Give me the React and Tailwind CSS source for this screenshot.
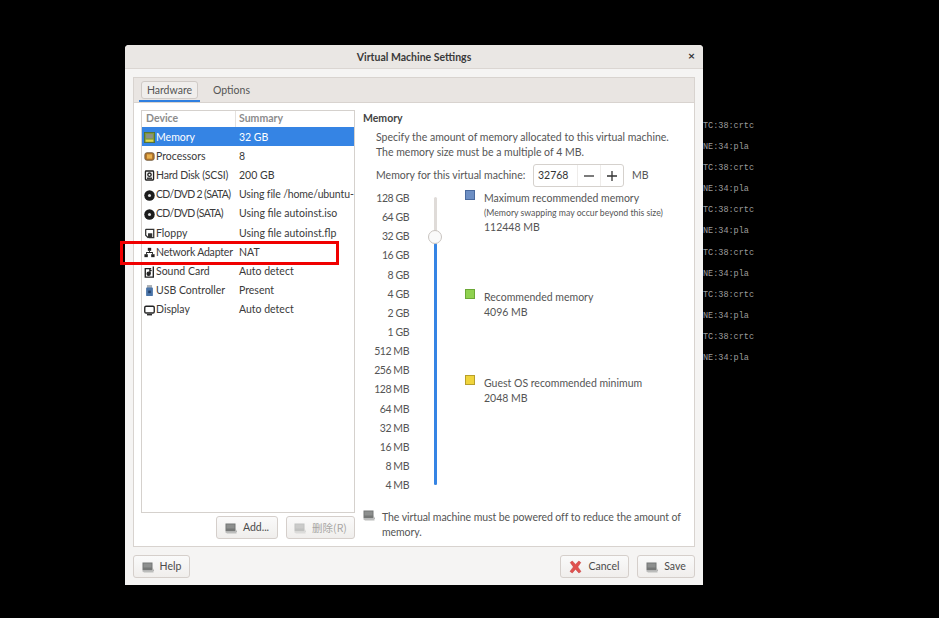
const devices = [
  { name: "Memory", summary: "32 GB", icon: "memory" },
  { name: "Processors", summary: "8", icon: "cpu" },
  { name: "Hard Disk (SCSI)", summary: "200 GB", icon: "disk", nameCls: "tracking-[-0.2px]" },
  { name: "CD/DVD 2 (SATA)", summary: "Using file /home/ubuntu-", icon: "cd", nameCls: "tracking-[-0.65px]", sumCls: "tracking-[-0.12px]" },
  { name: "CD/DVD (SATA)", summary: "Using file autoinst.iso", icon: "cd", nameCls: "tracking-[-0.65px]" },
  { name: "Floppy", summary: "Using file autoinst.flp", icon: "floppy" },
  { name: "Network Adapter", summary: "NAT", icon: "network", nameCls: "tracking-[-0.2px]" },
  { name: "Sound Card", summary: "Auto detect", icon: "sound" },
  { name: "USB Controller", summary: "Present", icon: "usb" },
  { name: "Display", summary: "Auto detect", icon: "display" },
];

const scale = ["128 GB", "64 GB", "32 GB", "16 GB", "8 GB", "4 GB", "2 GB", "1 GB", "512 MB", "256 MB", "128 MB", "64 MB", "32 MB", "16 MB", "8 MB", "4 MB"];

const termLines = ["TC:38:crtc", "NE:34:pla", "TC:38:crtc", "NE:34:pla", "TC:38:crtc", "NE:34:pla", "TC:38:crtc", "NE:34:pla", "TC:38:crtc", "NE:34:pla", "TC:38:crtc", "NE:34:pla"];

function DeviceIcon({ type }) {
  if (type === "memory")
    return (
      <svg width="11" height="11" viewBox="0 0 13 13">
        <rect x="0.5" y="0.5" width="12" height="12" fill="#7f9a3c" stroke="#55702a" />
        <rect x="2.5" y="2.5" width="8" height="5" fill="#8a8f88" />
        <rect x="2" y="9" width="9" height="2.5" fill="#e3d84d" />
      </svg>
    );
  if (type === "cpu")
    return (
      <svg width="11" height="11" viewBox="0 0 13 13">
        <rect x="1" y="2" width="11" height="9" rx="2.5" fill="#b5762a" stroke="#6f5a3e" />
        <rect x="3.5" y="4" width="6" height="5" fill="#e8b04e" />
      </svg>
    );
  if (type === "disk")
    return (
      <svg width="11" height="11" viewBox="0 0 13 13" fill="none" stroke="#222" strokeWidth="1.6">
        <rect x="1.7" y="1.2" width="9.6" height="10.6" rx="0.8" />
        <circle cx="6.5" cy="5.5" r="2" />
        <path d="M3.5 9.7h6" />
      </svg>
    );
  if (type === "cd")
    return (
      <svg width="11" height="11" viewBox="0 0 13 13">
        <circle cx="6.5" cy="6.5" r="6.2" fill="#1c1c1c" />
        <circle cx="6.5" cy="6.5" r="1.8" fill="#ddd" />
      </svg>
    );
  if (type === "floppy")
    return (
      <svg width="11" height="11" viewBox="0 0 13 13" fill="none" stroke="#333" strokeWidth="1.5">
        <path d="M2 1.5h9.5v10H5.5" />
        <path d="M2 1.5v7l3 3" />
        <rect x="5.5" y="7" width="3.5" height="4" fill="#333" />
      </svg>
    );
  if (type === "network")
    return (
      <svg width="11" height="11" viewBox="0 0 13 13" fill="#222">
        <rect x="4.5" y="1" width="4" height="3.5" />
        <rect x="0.5" y="8.5" width="4" height="3.5" />
        <rect x="8.5" y="8.5" width="4" height="3.5" />
        <path d="M6 4.5h1V6h3.5v2.5h-1V7h-6v1.5h-1V6H6z" />
      </svg>
    );
  if (type === "sound")
    return (
      <svg width="11" height="12" viewBox="0 0 13 14" fill="none" stroke="#222" strokeWidth="1.6">
        <path d="M8.5 3H1.5v10H11V0.5" />
        <circle cx="5.5" cy="9" r="1.8" fill="#222" />
        <path d="M7 9V4.5l2 1" />
      </svg>
    );
  if (type === "usb")
    return (
      <svg width="11" height="12" viewBox="0 0 13 14">
        <rect x="3.5" y="0" width="6" height="4" fill="#aab0b6" />
        <rect x="2.5" y="3" width="8" height="10" rx="1" fill="#4a74a8" />
        <rect x="5" y="6.5" width="3" height="3" fill="#23406a" />
      </svg>
    );
  return (
    <svg width="11" height="11" viewBox="0 0 13 13" fill="none" stroke="#222" strokeWidth="1.6">
      <rect x="0.9" y="1.5" width="11.2" height="8" rx="1.5" />
      <path d="M3.5 11.5h6" />
    </svg>
  );
}

// placeholder glyph the app shows for a missing button image
function MissingIcon({ faded }) {
  return (
    <svg width="12" height="11" viewBox="0 0 12 11" className={faded ? "opacity-40" : ""}>
      <rect x="0.5" y="0.5" width="10" height="8" fill="#757776" />
      <rect x="1.5" y="1.5" width="8" height="4" fill="#8d8f8e" />
      <path d="M0 9h11.5v1.5H2z" fill="#bcbdbc" />
      <path d="M10.5 5v4h1.5z" fill="#a3a4a3" />
    </svg>
  );
}

function CancelIcon() {
  return (
    <svg width="13" height="14" viewBox="0 0 13 14">
      <path d="M1.2 2.5L3.3 1l3.2 3.4L9.8 1l2 1.6-3 4.3 3.2 4.6-2.1 1.5-3.4-3.8-3.2 3.8L1 11.4l3.4-4.5z" fill="#e0524f" stroke="#c23b3b" strokeWidth="0.5" />
    </svg>
  );
}

function Button({ icon, children, className = "", faded }) {
  return (
    <div
      className={`flex h-[23px] items-center justify-center gap-[6px] rounded-[3px] border border-[#d5cfcb] bg-gradient-to-b from-[#fafafa] to-[#f0eeec] pt-[1px] ${faded ? "text-[#a8a6a4]" : "text-[#4b4b4b]"} ${className}`}
    >
      {icon}
      <span>{children}</span>
    </div>
  );
}

function Legend({ color, border, title, note, value, className = "" }) {
  return (
    <div className={`flex gap-[9px] ${className}`}>
      <div className={`mt-[-1px] h-[10px] w-[10px] shrink-0 border ${color} ${border}`} />
      <div className="text-[#555]">
        <div className="h-[15px] leading-[15px]">{title}</div>
        {note && <div className="h-[14px] text-[8.7px] leading-[14px]">{note}</div>}
        <div className="h-[14px] leading-[14px]">{value}</div>
      </div>
    </div>
  );
}

export default function App() {
  return (
    <div className="relative h-[618px] w-[939px] overflow-hidden bg-black font-['Lato',sans-serif] text-[10.5px]">
      {/* terminal behind the dialog */}
      <div className="absolute left-[703px] top-[116px] font-['Liberation_Mono',monospace] text-[8.5px] text-[#9c9c9c]">
        {termLines.map((line, i) => (
          <div key={i} className="h-[21.1px] leading-[21px]">{line}</div>
        ))}
      </div>

      {/* dialog window */}
      <div className="absolute left-[125px] top-[45px] flex h-[540px] w-[578px] flex-col rounded-t-[4px] bg-[#f5f4f3]">
        <div className="relative flex h-[24px] shrink-0 items-center justify-center rounded-t-[4px] border-b border-[#dbd6d2] bg-[#eae7e4] pt-[2px] font-bold text-[#3a3a3a]">
          Virtual Machine Settings
          <span className="absolute right-[8px] top-[3px] text-[12px] font-bold leading-[16px] text-[#333]">×</span>
        </div>

        <div className="mx-[8px] mt-[8px] flex h-[470px] flex-col border border-[#d8d3cf] bg-white">
          {/* tabs */}
          <div className="flex h-[25px] shrink-0 border-b border-[#d8d3cf] bg-[#e9e5e2] pl-[5px] text-[#555]">
            <div className="relative flex w-[61px] justify-center pt-[3px]">
              <div className="flex h-[18px] w-[57px] items-center justify-center rounded-[3px] border border-[#cfcac6] bg-[#f0eeec] pt-[1px]">Hardware</div>
              <div className="absolute inset-x-0 bottom-0 h-[2px] bg-[#2f7fe0]" />
            </div>
            <div className="ml-[13px] pt-[3px] leading-[19px]">Options</div>
          </div>

          <div className="flex min-h-0 flex-1">
            {/* left column: device list */}
            <div className="ml-[7px] flex w-[214px] shrink-0 flex-col pt-[7px]">
              <div className="flex h-[403px] flex-col border border-[#d5d1cd]">
                <div className="flex h-[16px] shrink-0 font-bold leading-[15px] text-[#8c8c8c]">
                  <div className="w-[94px] border-r border-[#e4e1de] pl-[4px]">Device</div>
                  <div className="pl-[3px]">Summary</div>
                </div>
                {devices.map((d) => (
                  <div
                    key={d.name}
                    className={`flex h-[19.2px] shrink-0 items-center pt-[2px] ${d.name === "Memory" ? "bg-[#3584e4] text-white" : "text-[#3a3a3a]"}`}
                  >
                    <span className="flex w-[14px] shrink-0 pl-[2px]"><DeviceIcon type={d.icon} /></span>
                    <span className={`w-[83px] shrink-0 whitespace-nowrap ${d.nameCls || ""}`}>{d.name}</span>
                    <span className={`whitespace-nowrap ${d.sumCls || ""}`}>{d.summary}</span>
                  </div>
                ))}
              </div>
              <div className="mt-[3px] flex justify-end gap-[8px]">
                <Button className="w-[62px]" icon={<MissingIcon />}>Add...</Button>
                <Button className="w-[69px]" faded icon={<MissingIcon faded />}>
                  <span className="font-['Noto_Sans_CJK_SC','Lato',sans-serif]">删除(R)</span>
                </Button>
              </div>
            </div>

            {/* right column: memory settings */}
            <div className="ml-[8px] flex min-w-0 flex-1 flex-col pt-[7px] text-[#555]">
              <div className="h-[16px] font-bold leading-[16px] text-[#444]">Memory</div>
              <div className="ml-[13px] mt-[4px] leading-[15px]">
                <div>Specify the amount of memory allocated to this virtual machine.</div>
                <div>The memory size must be a multiple of 4 MB.</div>
              </div>
              <div className="ml-[13px] mt-[4px] flex h-[23px] items-center">
                <span className="w-[157px] whitespace-nowrap">Memory for this virtual machine:</span>
                <div className="flex h-[23px] w-[91px] items-center rounded-[3px] border border-[#d5d1cd] text-[#333]">
                  <span className="w-[43px] pl-[4px]">32768</span>
                  <span className="flex h-full w-[23px] items-center justify-center border-l border-[#eeecea]">
                    <svg width="10" height="10" viewBox="0 0 10 10" stroke="#333" strokeWidth="1.3"><path d="M0 5h10" /></svg>
                  </span>
                  <span className="flex h-full w-[23px] items-center justify-center border-l border-[#eeecea]">
                    <svg width="10" height="10" viewBox="0 0 10 10" stroke="#333" strokeWidth="1.3"><path d="M0 5h10M5 0v10" /></svg>
                  </span>
                </div>
                <span className="ml-[8px]">MB</span>
              </div>

              <div className="mt-[2px] flex h-[308px]">
                <div className="ml-[2px] w-[44px] text-right tracking-[-0.45px] text-[#555]">
                  {scale.map((s) => (
                    <div key={s} className="h-[19.15px] leading-[19px]">{s}</div>
                  ))}
                </div>
                <div className="relative ml-[25px] mt-[8px] h-[288px] w-[3px] shrink-0 rounded-full bg-[#dfdbd8]">
                  <div className="absolute inset-x-0 bottom-0 top-[46px] rounded-full bg-[#3584e4]" />
                  <div className="absolute left-[-6px] top-[33px] h-[14px] w-[14px] rounded-full border border-[#c9c4c0] bg-[#fafafa]" />
                </div>
                <div className="ml-[28px] pt-[2px]">
                  <Legend color="bg-[#6d8fc4]" border="border-[#4a6a9e]" title="Maximum recommended memory" note="(Memory swapping may occur beyond this size)" value="112448 MB" />
                  <Legend className="mt-[56px]" color="bg-[#8fd14f]" border="border-[#6ca836]" title="Recommended memory" value="4096 MB" />
                  <Legend className="mt-[57px]" color="bg-[#f0d43c]" border="border-[#b79f2b]" title="Guest OS recommended minimum" value="2048 MB" />
                </div>
              </div>

              <div className="mt-[13px] flex gap-[7px]">
                <span><MissingIcon /></span>
                <div className="w-[305px] leading-[15px] tracking-[-0.07px]">The virtual machine must be powered off to reduce the amount of memory.</div>
              </div>
            </div>
          </div>
        </div>

        {/* bottom buttons */}
        <div className="mx-[8px] mt-[8px] flex">
          <Button className="w-[57px]" icon={<MissingIcon />}>Help</Button>
          <Button className="ml-auto w-[69px]" icon={<CancelIcon />}>Cancel</Button>
          <Button className="ml-[8px] w-[58px]" icon={<MissingIcon />}>Save</Button>
        </div>
      </div>

      {/* red annotation box around the network adapter row */}
      <div className="absolute left-[120px] top-[241px] h-[24px] w-[219px] border-[3px] border-[#f00000]" />
    </div>
  );
}
